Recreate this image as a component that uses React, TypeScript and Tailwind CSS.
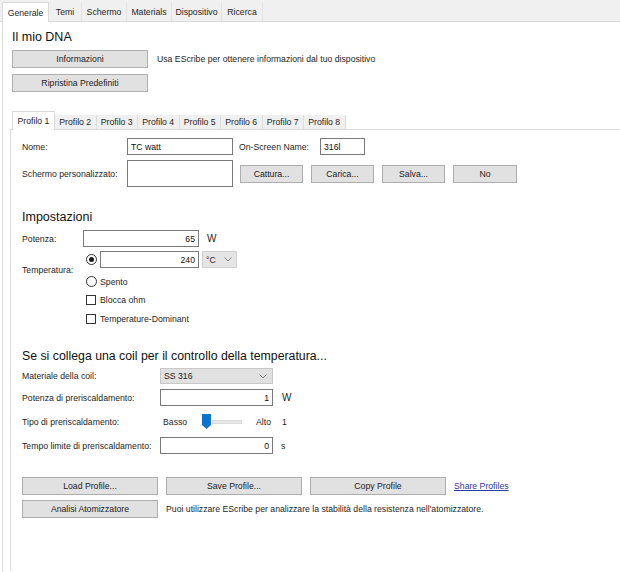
import React from "react";

const topTabs = [
  { label: "Generale", w: "w-[47px]" },
  { label: "Temi", w: "w-[33px]" },
  { label: "Schermo", w: "w-[45px]" },
  { label: "Materials", w: "w-[45px]" },
  { label: "Dispositivo", w: "w-[50px]" },
  { label: "Ricerca", w: "w-[41px]" },
];

const profiles = ["Profilo 1", "Profilo 2", "Profilo 3", "Profilo 4", "Profilo 5", "Profilo 6", "Profilo 7", "Profilo 8"];

const Btn = ({ label, className = "" }: { label: string; className?: string }) => (
  <button
    type="button"
    className={`h-[18px] border border-[#adadad] bg-[#e1e1e1] flex items-center justify-center text-[#222] shrink-0 ${className}`}
  >
    {label}
  </button>
);

const Field = ({ value, className = "", align = "right" }: { value: string; className?: string; align?: "left" | "right" }) => (
  <input
    readOnly
    value={value}
    className={`h-[17px] border border-[#7a7a7a] bg-white px-[3px] text-[#111] outline-none shrink-0 ${
      align === "right" ? "text-right" : "text-left"
    } ${className}`}
  />
);

const Chevron = () => (
  <svg width="8" height="5" viewBox="0 0 8 5" className="shrink-0">
    <path d="M0.5 0.5 L4 4 L7.5 0.5" fill="none" stroke="#808080" strokeWidth="1" />
  </svg>
);

const Radio = ({ checked = false }: { checked?: boolean }) => (
  <span className="w-[11px] h-[11px] rounded-full border border-[#333] bg-white flex items-center justify-center shrink-0">
    {checked && <span className="w-[5px] h-[5px] rounded-full bg-[#1a1a1a]" />}
  </span>
);

const Check = () => <span className="block w-[10px] h-[10px] border border-[#333] bg-white shrink-0" />;

export default function App() {
  return (
    <div className="w-[620px] h-[572px] bg-white overflow-hidden font-['Liberation_Sans',Arial,sans-serif] text-[8.7px] leading-[12px] text-[#1e1e1e]">
      {/* top tabs */}
      <div className="h-[22px] bg-[#f0f0f0] border-b border-[#d9d9d9] flex items-end pl-[2px]">
        {topTabs.map((t, i) => (
          <div
            key={t.label}
            className={`${t.w} flex items-center justify-center ${
              i === 0
                ? "h-[20px] bg-white border border-b-0 border-[#d9d9d9] -mb-px relative"
                : "h-[18px] border-r border-[#e2e2e2]"
            }`}
          >
            {t.label}
          </div>
        ))}
      </div>

      <div className="ml-[2px] h-[550px] border-l border-[#dcdcdc]">
        {/* Il mio DNA */}
        <div className="pl-[9px] pt-[8px]">
          <div className="text-[12.5px] leading-[15px] text-[#111]">Il mio DNA</div>
          <div className="mt-[5px] flex items-center">
            <Btn label="Informazioni" className="w-[136px]" />
            <span className="ml-[9px]">Usa EScribe per ottenere informazioni dal tuo dispositivo</span>
          </div>
          <Btn label="Ripristina Predefiniti" className="w-[136px] mt-[6px]" />
        </div>

        {/* profile tabs */}
        <div className="ml-[7px] mt-[20px]">
          <div className="h-[18px] border-b border-[#d9d9d9] flex items-end pl-[2px]">
            {profiles.map((p, i) => (
              <div
                key={p}
                className={`flex items-center justify-center ${
                  i === 0
                    ? "w-[43px] h-[19px] bg-white border border-b-0 border-[#d9d9d9] -mb-px relative"
                    : "w-[41.5px] h-[14px] bg-[#f0f0f0] border-r border-[#dddddd]"
                }`}
              >
                {p}
              </div>
            ))}
          </div>

          <div className="border-l border-[#dcdcdc] pl-[11px] pt-[8px] h-[440px]">
            {/* Nome */}
            <div className="flex items-center">
              <span className="w-[105px] shrink-0">Nome:</span>
              <Field value="TC watt" align="left" className="w-[106px]" />
              <span className="ml-[6px] w-[81px] shrink-0">On-Screen Name:</span>
              <Field value="316l" align="left" className="w-[45px]" />
            </div>

            {/* Schermo */}
            <div className="flex items-center mt-[5px]">
              <span className="w-[105px] shrink-0">Schermo personalizzato:</span>
              <div className="w-[106px] h-[27px] border border-[#7a7a7a] bg-white shrink-0" />
              <div className="ml-[7px] flex gap-[8px]">
                <Btn label="Cattura..." className="w-[63px]" />
                <Btn label="Carica..." className="w-[63px]" />
                <Btn label="Salva..." className="w-[63px]" />
                <Btn label="No" className="w-[64px]" />
              </div>
            </div>

            {/* Impostazioni */}
            <div className="mt-[23px] text-[12.5px] leading-[15px] text-[#111]">Impostazioni</div>
            <div className="mt-[5px] flex items-center">
              <span className="w-[61px] shrink-0">Potenza:</span>
              <Field value="65" className="w-[116px]" />
              <span className="ml-[8px] text-[10px]">W</span>
            </div>

            <div className="mt-[4px] flex">
              <span className="w-[61px] shrink-0 pt-[13px]">Temperatura:</span>
              <div className="flex flex-col">
                <div className="flex items-center h-[17px]">
                  <span className="ml-[3px]">
                    <Radio checked />
                  </span>
                  <Field value="240" className="ml-[3px] w-[99px]" />
                  <div className="ml-[3px] w-[35px] h-[17px] bg-[#e5e5e5] border border-[#d2d2d2] flex items-center justify-between pl-[3px] pr-[4px]">
                    <span>°C</span>
                    <Chevron />
                  </div>
                </div>
                <div className="flex items-center h-[17px] mt-[5px]">
                  <span className="ml-[3px]">
                    <Radio />
                  </span>
                  <span className="ml-[3px]">Spento</span>
                </div>
                <div className="flex items-center h-[17px] mt-[1px]">
                  <span className="ml-[3px]">
                    <Check />
                  </span>
                  <span className="ml-[4px]">Blocca ohm</span>
                </div>
                <div className="flex items-center h-[17px] mt-[2px]">
                  <span className="ml-[3px]">
                    <Check />
                  </span>
                  <span className="ml-[4px]">Temperature-Dominant</span>
                </div>
              </div>
            </div>

            {/* coil */}
            <div className="mt-[22px] text-[12.3px] leading-[15px] text-[#111]">
              Se si collega una coil per il controllo della temperatura...
            </div>
            <div className="mt-[4px] flex items-center">
              <span className="w-[138px] shrink-0">Materiale della coil:</span>
              <div className="w-[113px] h-[16px] bg-[#e1e1e1] border border-[#c8c8c8] flex items-center justify-between pl-[3px] pr-[5px]">
                <span>SS 316</span>
                <Chevron />
              </div>
            </div>
            <div className="mt-[5px] flex items-center">
              <span className="w-[138px] shrink-0">Potenza di preriscaldamento:</span>
              <Field value="1" className="w-[113px]" />
              <span className="ml-[9px] text-[10px]">W</span>
            </div>
            <div className="mt-[7px] flex items-center h-[17px]">
              <span className="w-[138px] shrink-0">Tipo di preriscaldamento:</span>
              <span className="ml-[3px] w-[39px] shrink-0">Basso</span>
              <div className="flex items-center w-[42px] shrink-0">
                <svg width="9" height="15" viewBox="0 0 9 15" className="shrink-0">
                  <path d="M0 0 H9 V11 L4.5 15 L0 11 Z" fill="#0a74d0" />
                </svg>
                <div className="ml-[1px] w-[30px] h-[4px] bg-[#e7e7e7] border border-[#dadada]" />
              </div>
              <span className="ml-[12px] w-[26px] shrink-0">Alto</span>
              <span>1</span>
            </div>
            <div className="mt-[7px] flex items-center">
              <span className="w-[138px] shrink-0">Tempo limite di preriscaldamento:</span>
              <Field value="0" className="w-[113px]" />
              <span className="ml-[8px]">s</span>
            </div>

            {/* bottom buttons */}
            <div className="mt-[23px] flex items-center gap-[8px]">
              <Btn label="Load Profile..." className="w-[136px]" />
              <Btn label="Save Profile..." className="w-[136px]" />
              <Btn label="Copy Profile" className="w-[136px]" />
              <a href="#" className="text-[#2c3c9e] underline">
                Share Profiles
              </a>
            </div>
            <div className="mt-[5px] flex items-center">
              <Btn label="Analisi Atomizzatore" className="w-[136px]" />
              <span className="ml-[8px]">Puoi utilizzare EScribe per analizzare la stabilità della resistenza nell'atomizzatore.</span>
            </div>
          </div>
        </div>
      </div>
    </div>
  );
}
